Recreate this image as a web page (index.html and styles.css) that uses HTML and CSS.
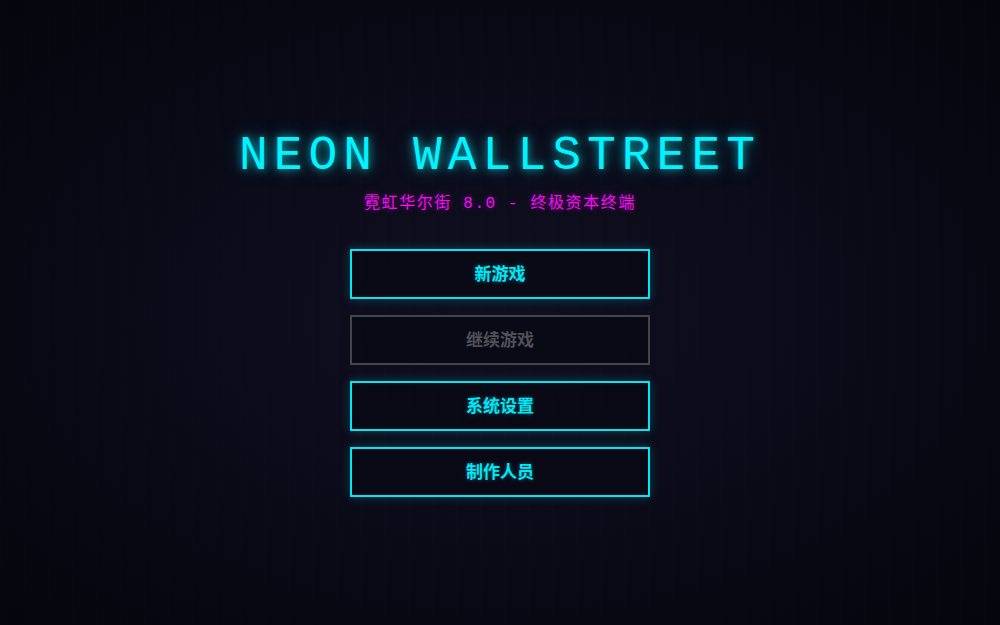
FILE: index.html
```html
<!DOCTYPE html>
<html lang="zh-CN">
<head>
<meta charset="utf-8">
<title>Neon Wallstreet</title>
<link rel="stylesheet" href="styles.css">
</head>
<body>
<main class="screen">
  <h1 class="title">NEON WALLSTREET</h1>
  <p class="subtitle">霓虹华尔街 8.0 - 终极资本终端</p>
  <nav class="menu">
    <button class="btn">新游戏</button>
    <button class="btn btn-disabled" disabled>继续游戏</button>
    <button class="btn">系统设置</button>
    <button class="btn">制作人员</button>
  </nav>
</main>
</body>
</html>
```

FILE: styles.css
```css
html, body {
  margin: 0;
  padding: 0;
  width: 100%;
  height: 100%;
}

body {
  background: radial-gradient(ellipse at 50% 50%, #0f0f20 0%, #0b0b19 45%, #05050d 100%);
  overflow: hidden;
}

.screen {
  height: 625px;
  display: flex;
  flex-direction: column;
  align-items: center;
  justify-content: center;
  background-image: repeating-linear-gradient(90deg, rgba(255,255,255,0.003) 0px, rgba(255,255,255,0.003) 2px, rgba(0,0,0,0) 2px, rgba(0,0,0,0) 24px);
}

.title {
  margin: 0 0 8px 0;
  font-family: "Liberation Mono", "Courier New", monospace;
  font-weight: normal;
  font-size: 48px;
  line-height: 56px;
  letter-spacing: 6px;
  color: #00f3ff;
  text-shadow: 0 0 8px rgba(0, 243, 255, 0.7), 0 0 20px rgba(0, 243, 255, 0.35);
}

.subtitle {
  margin: 0 0 33px 0;
  font-family: "Liberation Mono", "Noto Sans CJK SC", monospace;
  font-size: 16px;
  line-height: 24px;
  letter-spacing: 1.6px;
  color: #f010f0;
  text-shadow: 0 0 6px rgba(255, 0, 255, 0.45);
}

.menu {
  display: flex;
  flex-direction: column;
  gap: 16px;
}

.btn {
  box-sizing: border-box;
  width: 300px;
  height: 50px;
  border: 2px solid #00e8f6;
  background: rgba(8, 8, 20, 0.7);
  color: #00e8f6;
  font-family: "Noto Sans CJK SC", "Noto Sans", sans-serif;
  font-weight: bold;
  font-size: 17px;
  line-height: 20px;
  padding: 0 0 2px 0;
  box-shadow: 0 0 10px rgba(0, 232, 246, 0.25);
  text-shadow: 0 0 4px rgba(0, 232, 246, 0.4);
  cursor: pointer;
}

.btn-disabled {
  border-color: #444449;
  color: #505058;
  box-shadow: none;
  text-shadow: none;
  cursor: default;
}
```
